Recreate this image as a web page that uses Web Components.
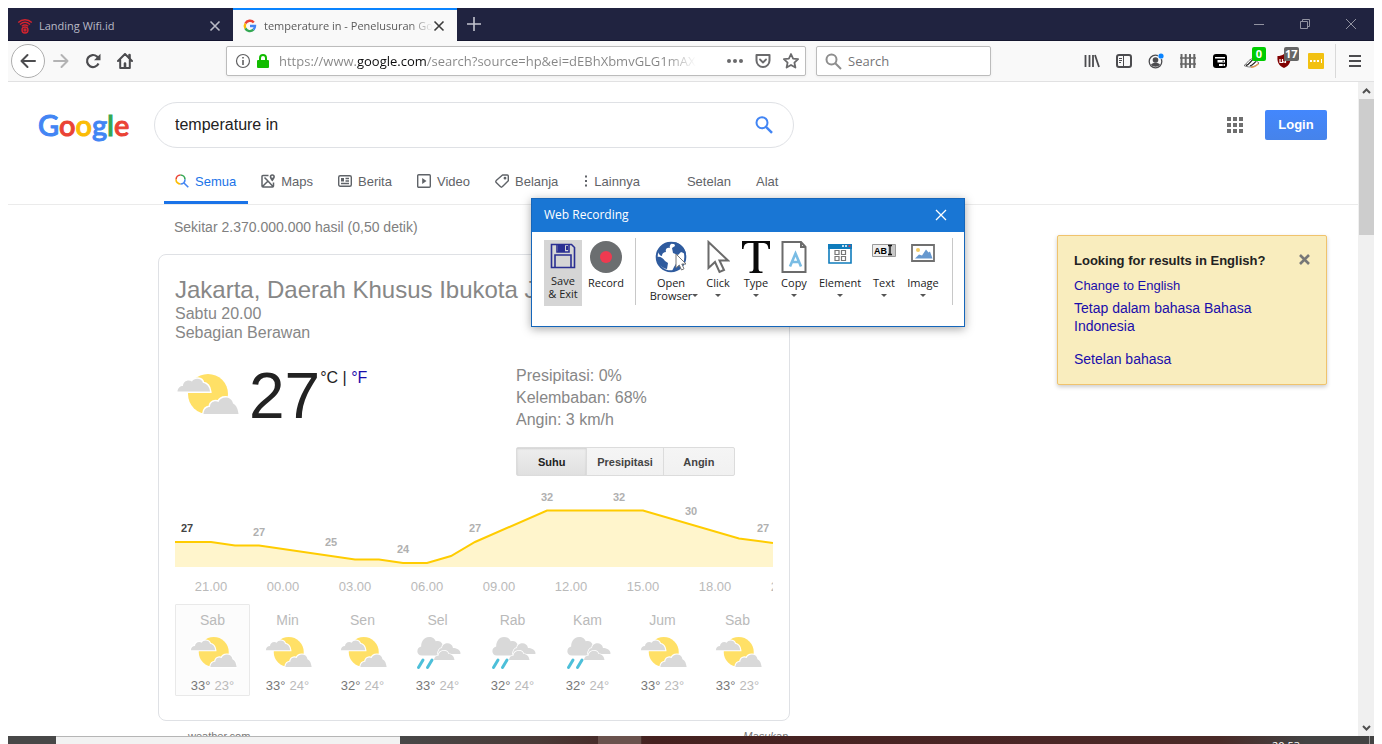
<!DOCTYPE html>
<html lang="id">
<head>
<meta charset="utf-8">
<title>temperature in - Penelusuran Google</title>
<style>
  html, body { height: 100%; }
  body { margin: 0; background: #fff; overflow: hidden; font-family: "Liberation Sans", Arial, sans-serif; }
</style>
</head>
<body>
<browser-window></browser-window>
<script>
const BASE = `
  *, *::before, *::after { box-sizing: border-box; }
  :host { box-sizing: border-box; }
  button { font: inherit; color: inherit; border: 0; background: none; padding: 0; margin: 0; cursor: pointer; }
  a { color: inherit; text-decoration: none; }
  svg { display: block; }
`;

function component(name, css, html) {
  const template = document.createElement('template');
  template.innerHTML = `<style>${BASE}${css}</style>${html}`;
  customElements.define(name, class extends HTMLElement {
    constructor() {
      super();
      this.attachShadow({ mode: 'open' }).append(template.content.cloneNode(true));
    }
  });
}

/* ---------- Browser chrome ---------- */

component('browser-tab', `
  :host { display: flex; align-items: center; width: 225px; height: 33px; padding: 3px 12px 0 9px;
          color: #b9bac6; border-bottom: 1px solid #12132e; }
  :host([active]) { width: 224px; background: #f9f9f9; color: #5a5a5a; border-bottom: 0; border-top: 2px solid #0a84ff; padding-top: 0; }
  .title { flex: 1; margin-left: 6px; min-width: 0; overflow: hidden; white-space: nowrap; font-size: 11px; line-height: 18px; }
  :host([active]) .title { -webkit-mask-image: linear-gradient(90deg, #000 86%, transparent 100%); mask-image: linear-gradient(90deg, #000 86%, transparent 100%); }
  :host([active]) button { color: #3c3c3c; }
  button { flex: none; width: 12px; }
`, `
  <slot name="icon"></slot>
  <span class="title"><slot></slot></span>
  <button aria-label="Close tab"><svg width="12" height="12" viewBox="0 0 12 12" stroke="currentColor" stroke-width="1.6"><path d="M1.500 1.500l9 9M10.500 1.500l-9 9"/></svg></button>
`);

component('tab-strip', `
  :host { display: flex; height: 33px; background: #202340; border-bottom: 1px solid #15172f; font-family: "Open Sans", "Noto Sans", sans-serif; color: #c4c5cf; }
  .add { width: 34px; display: grid; place-items: center; }
  .controls { margin-left: auto; display: flex; color: #9293a1; }
  .controls button { width: 46px; height: 32px; display: grid; place-items: center; }
`, `
  <browser-tab>
    <svg slot="icon" width="16" height="16" viewBox="0 0 16 16" fill="none" stroke="#d3232e" stroke-width="1.4">
      <path d="M1.200 4.500C5 .8 11 .8 14.800 4.500M3 6.500c3-2.600 7-2.600 10 0M4.800 8.300c2-1.600 4.400-1.600 6.400 0"/><circle cx="8" cy="12" r="3"/><circle cx="8" cy="12" r="1"/>
    </svg>Landing Wifi.id
  </browser-tab>
  <browser-tab active>
    <svg slot="icon" width="16" height="16" viewBox="0 0 16 16" fill="none" stroke-width="2.400">
      <path stroke="#ea4335" d="M3.400 5.600A5 5 0 0 1 11.800 4.500"/><path stroke="#fbbc05" d="M3.400 10.400a5 5 0 0 1 0-4.800"/>
      <path stroke="#34a853" d="M11.400 11.700a5 5 0 0 1-8-1.300"/><path stroke="#4285f4" d="M8 8h5a5 5 0 0 1-1.600 3.700"/>
    </svg>temperature in - Penelusuran Google
  </browser-tab>
  <button class="add" aria-label="New tab"><svg width="14" height="14" viewBox="0 0 14 14" stroke="currentColor" stroke-width="1.600"><path d="M7 0v14M0 7h14"/></svg></button>
  <div class="controls">
    <button aria-label="Minimize"><svg width="10" height="10" stroke="currentColor"><path d="M0 5.500h10"/></svg></button>
    <button aria-label="Restore"><svg width="10" height="10" fill="none" stroke="currentColor"><path d="M.5 2.500h7v7h-7zM2.500 2.500v-2h7v7h-2"/></svg></button>
    <button aria-label="Close"><svg width="10" height="10" stroke="currentColor"><path d="M0 0l10 10M10 0L0 10"/></svg></button>
  </div>
`);

component('tool-button', `
  :host { display: block; flex: none; width: 32px; height: 32px; color: #4c4c4f; }
  button { position: relative; width: 100%; height: 100%; display: grid; place-items: center; }
  ::slotted([slot="badge"]) { position: absolute; left: 16px; top: 2px; min-width: 14px; height: 14px; padding: 0 1px; border-radius: 2px;
    background: var(--badge, #0c0); color: #fff; font: bold 11px/14px "Open Sans", sans-serif; text-align: center; }
`, `<button part="button"><slot></slot><slot name="badge"></slot></button>`);

component('url-bar', `
  :host { display: flex; align-items: center; height: 30px; padding: 0 5px 0 8px; gap: 5px; background: #fff; border: 1px solid #bcbcbc; border-radius: 2px; box-shadow: 0 1px 3px rgba(0,0,0,.06); color: #6a6a6c; }
  input { flex: 1; min-width: 0; height: 26px; margin-left: 4px; padding: 0; border: 0; outline: 0; font: 13px/26px "Open Sans", "Noto Sans", sans-serif;
    background: linear-gradient(90deg, #858585 0 78px, #0c0c0d 78px 148px, #858585 148px calc(100% - 50px), transparent calc(100% - 20px));
    -webkit-background-clip: text; background-clip: text; color: transparent; }
  button { width: 18px; margin-left: 5px; display: grid; place-items: center; }
`, `
  <svg width="16" height="16" viewBox="0 0 16 16" fill="none" stroke="#5f5f61"><circle cx="8" cy="8" r="6.500" stroke-width="1.200"/><path d="M8 7v5M8 4v1.600" stroke-width="1.600"/></svg>
  <svg width="14" height="16" viewBox="0 0 14 16"><path d="M4 8V5a3 3 0 0 1 6 0v3" fill="none" stroke="#12bc00" stroke-width="2"/><rect x="1" y="7" width="12" height="8" rx="1" fill="#12bc00"/></svg>
  <input aria-label="Address" value="https://www.google.com/search?source=hp&amp;ei=dEBhXbmvGLG1mAX">
  <button aria-label="Page actions"><svg width="16" height="16" fill="currentColor"><circle cx="2" cy="8" r="2"/><circle cx="8" cy="8" r="2"/><circle cx="14" cy="8" r="2"/></svg></button>
  <button aria-label="Pocket"><svg width="16" height="16" viewBox="0 0 16 16" fill="none" stroke="currentColor" stroke-width="2" stroke-linecap="round" stroke-linejoin="round"><path d="M1.500 2h13v5.500a6.500 6.500 0 0 1-13 0z"/><path d="M5 6.500l3 3 3-3" stroke-width="1.800"/></svg></button>
  <button aria-label="Bookmark"><svg width="18" height="18" viewBox="0 0 18 18" fill="none" stroke="currentColor" stroke-width="1.800" stroke-linejoin="round"><path d="M9 2l2.100 4.600 5 .6-3.700 3.400 1 4.900L9 13l-4.400 2.500 1-4.900L1.900 7.200l5-.6z"/></svg></button>
`);

component('nav-bar', `
  :host { display: flex; align-items: center; height: 41px; padding: 0 3px; background: #f9f9f9; border-bottom: 1px solid #e1e1e2; }
  .space { flex: 85 1 85px; }
  url-bar { flex: 580 1 580px; min-width: 0; margin-right: 10px; }
  .find { flex: 175 1 175px; min-width: 0; height: 30px; display: flex; align-items: center; gap: 6px; padding: 0 8px; background: #fff; border: 1px solid #bcbcbc; border-radius: 2px; box-shadow: 0 1px 3px rgba(0,0,0,.06); }
  .find input { flex: 1; min-width: 0; padding: 0; border: 0; outline: 0; font: 13px/24px "Open Sans", "Noto Sans", sans-serif; }
  .find input::placeholder { color: #757577; }
  .back { width: 34px; height: 34px; border: 1px solid #aeaeae; border-radius: 50%; background: #fff; }
  .line { flex: none; width: 1px; height: 34px; margin: 0 3px; background: #d9d9d9; }
  .dim { color: #b3b3b4; }
`, `
  <tool-button class="back"><svg width="16" height="16" viewBox="0 0 16 16" fill="none" stroke="currentColor" stroke-width="2" stroke-linecap="round" stroke-linejoin="round"><path d="M15 8H1.500M7.500 2l-6 6 6 6"/></svg></tool-button>
  <tool-button class="dim"><svg width="16" height="16" viewBox="0 0 16 16" fill="none" stroke="currentColor" stroke-width="2" stroke-linecap="round" stroke-linejoin="round"><path d="M1 8h13.500M8.500 2l6 6-6 6"/></svg></tool-button>
  <tool-button><svg width="16" height="16" viewBox="0 0 16 16"><path d="M13.500 10.500A6 6 0 1 1 12 3.500L13 5" fill="none" stroke="currentColor" stroke-width="2.200"/><path d="M15.500.8v6.400H9z" fill="currentColor"/></svg></tool-button>
  <tool-button><svg width="16" height="16" viewBox="0 0 16 16" fill="none" stroke="currentColor" stroke-width="2" stroke-linecap="round" stroke-linejoin="round"><path d="M1 8l7-7 7 7M3.200 7v8h9.600V7"/><path d="M8 15v-4.500M12.500 2v3" stroke-width="2.600"/></svg></tool-button>
  <div class="space"></div>
  <url-bar></url-bar>
  <label class="find"><svg width="17" height="17" viewBox="0 0 17 17" fill="none" stroke="#8e8e8e" stroke-width="2"><circle cx="6.500" cy="6.500" r="5"/><path d="M10.300 10.300l5.700 5.700"/></svg><input aria-label="Search" placeholder="Search"></label>
  <div class="space"></div>
  <tool-button><svg width="16" height="16" viewBox="0 0 16 16" fill="none" stroke="currentColor" stroke-width="1.800"><path d="M1.500 2v12M5.500 2v12M9 2v12M11 2l4 12"/></svg></tool-button>
  <tool-button><svg width="16" height="16" viewBox="0 0 16 16" fill="none" stroke="currentColor"><rect x="1" y="2" width="14" height="12" rx="2" stroke-width="2"/><path d="M7.500 2v12M3 5.500h3M3 7.500h3M3 9.500h2"/></svg></tool-button>
  <tool-button><svg width="16" height="16" viewBox="0 0 16 16"><circle cx="7.500" cy="8.500" r="6.300" fill="none" stroke="currentColor" stroke-width="1.300"/><circle cx="7.500" cy="7" r="2.800" fill="currentColor"/><path d="M3 11.500c2-2.200 7-2.200 9 0-1.500 3-7.500 3-9 0z" fill="currentColor"/><circle cx="13" cy="3" r="3.200" fill="#f9f9f9"/><circle cx="13" cy="3" r="2.600" fill="#0a84ff"/></svg></tool-button>
  <tool-button><svg width="18" height="16" viewBox="0 0 18 16" fill="none" stroke="#666" stroke-width="2"><path d="M2.500 1v14M6.700 1v14M11 1v14M15.300 1v14"/><path d="M1 5h16M1 11h16" stroke-width="1.400"/></svg></tool-button>
  <tool-button><svg width="16" height="16" viewBox="0 0 16 16"><rect x="1" y="1" width="14" height="14" rx="3" fill="#000"/><path d="M3 4h10v1.500H3zM5.500 7H13v2.500H5.500zM7 11h6v2H7z" fill="#fff"/><path d="M10.500 8.200h1.500M10.500 12h1.500" stroke="#000"/></svg></tool-button>
  <tool-button><svg width="18" height="16" viewBox="0 0 18 16" fill="none"><path d="M1 12.500c3-1.500 4-6 9-7l6 4.500c-3 3.500-9 5.500-15 2.500z" fill="#fff" stroke="#555" stroke-width=".8"/><path d="M3 12.500c4-1 4-4 7-6M7 13c3-1 4-3 6-4.500" stroke="#222" stroke-width="1.300"/><path d="M8 14.300c3 0 5-1 7.500-3.500" stroke="#e39b55" stroke-width="1.300"/></svg><span slot="badge">0</span></tool-button>
  <tool-button style="--badge:#666"><svg width="16" height="16" viewBox="0 0 16 16"><path d="M8 1c2 1.500 4 2 6.500 2 .5 6-1 9.500-6.500 12C2.500 12.500 1 9 1.500 3 4 3 6 2.500 8 1z" fill="#800000"/><path d="M4 6v3.500h2.500V6M6.500 8.500l3 1V6" fill="none" stroke="#fff" stroke-width="1.200"/></svg><span slot="badge">17</span></tool-button>
  <tool-button><svg width="16" height="16" viewBox="0 0 16 16"><rect width="16" height="16" rx="1" fill="#f2c112"/><path d="M2 7h2v2H2zM5.500 7h2v2h-2zM9 7h2v2H9zM13 6h1v4h-1z" fill="#fff"/></svg></tool-button>
  <div class="line"></div>
  <tool-button><svg width="14" height="14" stroke="currentColor" stroke-width="2"><path d="M1 2h12M1 7h12M1 12h12"/></svg></tool-button>
`);

component('scroll-track', `
  :host { display: flex; flex-direction: column; align-items: center; width: 16px; background: #f0f0f0; color: #505050; }
  button { width: 16px; height: 17px; display: grid; place-items: center; flex: none; }
  .thumb { width: 15px; height: 136px; background: #cdcdcd; margin-bottom: auto; }
`, `
  <button aria-label="Scroll up"><svg width="9" height="6" fill="none" stroke="currentColor" stroke-width="2"><path d="M1 5l3.500-3.500L8 5"/></svg></button>
  <div class="thumb"></div>
  <button aria-label="Scroll down"><svg width="9" height="6" fill="none" stroke="currentColor" stroke-width="2"><path d="M1 1l3.500 3.500L8 1"/></svg></button>
`);

/* ---------- Search page ---------- */

component('search-header', `
  :host { display: block; padding: 20px 31px 0 30px; border-bottom: 1px solid #ebebeb; }
  .row { display: flex; align-items: center; height: 46px; }
  .logo { flex: none; width: 116px; font: 500 29px/44px Lato, "Open Sans", sans-serif; color: #4285f4; -webkit-text-stroke: 1px currentColor; }
  .r { color: #ea4335; } .y { color: #fbbc05; } .g { color: #34a853; }
  form { flex: 0 1 640px; height: 46px; display: flex; align-items: center; padding: 0 20px; border: 1px solid #dfe1e5; border-radius: 24px; }
  input { flex: 1; min-width: 0; border: 0; outline: 0; padding: 0; font: 16px/24px "Liberation Sans", Arial, sans-serif; color: #222; background: none; }
  .apps { margin-left: auto; margin-right: 22px; }
  .login { width: 62px; height: 30px; line-height: 30px; border-radius: 2px; background: linear-gradient(#4387fd, #4683ea); color: #fff; font-size: 13px; font-weight: bold; text-align: center; }
  nav { display: flex; gap: 2px; margin-left: 126px; height: 56px; color: #5f6368; font-size: 13px; }
  nav a { display: flex; align-items: center; gap: 6px; padding: 13px 12px 0 11px; border-bottom: 3px solid transparent; }
  nav a.on { color: #1a73e8; border-color: #1a73e8; }
  nav a.tools { margin-left: 22px; }
`, `
  <div class="row">
    <a class="logo" href="#" aria-label="Google">G<span class="r">o</span><span class="y">o</span>g<span class="g">l</span><span class="r">e</span></a>
    <form onsubmit="return false">
      <input aria-label="Telusuri" value="temperature in">
      <button aria-label="Cari"><svg width="18" height="18" viewBox="0 0 18 18" fill="none" stroke="#4285f4" stroke-width="2"><circle cx="7" cy="6.700" r="5.500"/><path d="M11 10.800l6 6" stroke-width="2.400"/></svg></button>
    </form>
    <button class="apps" aria-label="Aplikasi Google"><svg width="16" height="16" fill="#6f6f6f"><path d="M0 0h4v4H0zM6 0h4v4H6zM12 0h4v4h-4zM0 6h4v4H0zM6 6h4v4H6zM12 6h4v4h-4zM0 12h4v4H0zM6 12h4v4H6zM12 12h4v4h-4z"/></svg></button>
    <a class="login" href="#">Login</a>
  </div>
  <nav>
    <a class="on" href="#"><svg width="14" height="14" viewBox="0 0 14 14" fill="none" stroke-width="1.600"><path stroke="#ea4335" d="M1.100 5.500A4.500 4.500 0 0 1 5.500 1"/><path stroke="#34a853" d="M5.500 1A4.500 4.500 0 0 1 10 5.500"/><path stroke="#fbbc05" d="M1 5.500A4.500 4.500 0 0 0 5.500 10"/><path stroke="#4285f4" d="M5.500 10A4.500 4.500 0 0 0 10 5.500M8.700 8.700l4.600 4.600"/></svg>Semua</a>
    <a href="#"><svg width="14" height="14" viewBox="0 0 14 14" fill="none" stroke="#5f6368" stroke-width="1.500"><path d="M7.500 1.500H2A1 1 0 0 0 1 2.500V12a1 1 0 0 0 1 1h9.500a1 1 0 0 0 1-1V8.500M1.500 12.500L7 7l5 5.500M3.500 3.500L7 7"/><path d="M11.300.2a2.600 2.600 0 0 1 2.600 2.600c0 2-2.600 4.700-2.600 4.700S8.700 4.800 8.700 2.800A2.600 2.600 0 0 1 11.300.2z" fill="#5f6368" stroke="none"/><circle cx="11.300" cy="2.800" r="1" fill="#fff" stroke="none"/></svg>Maps</a>
    <a href="#"><svg width="14" height="14" viewBox="0 0 14 14" fill="none" stroke="#5f6368" stroke-width="1.400"><rect x=".7" y="1.700" width="12.600" height="10.600" rx="1.500"/><path d="M3 9.500h8M7.500 4.500H11M7.500 7H11"/><path d="M3 4h3v3.500H3z" fill="#5f6368" stroke="none"/></svg>Berita</a>
    <a href="#"><svg width="14" height="14" viewBox="0 0 14 14" fill="none" stroke="#5f6368" stroke-width="1.400"><rect x=".7" y=".7" width="12.600" height="12.600" rx="1"/><path d="M5.200 4l4.300 3-4.300 3z" fill="#5f6368" stroke="none"/></svg>Video</a>
    <a href="#"><svg width="14" height="14" viewBox="0 0 14 14" fill="none" stroke="#5f6368" stroke-width="1.400" stroke-linejoin="round"><path d="M7.500 1h4.800a1 1 0 0 1 1 1v4.800L7.500 12.600c-.8.800-1.400.8-2.200 0L1.200 8.600c-.6-.7-.6-1.300 0-2z"/><circle cx="10" cy="4.200" r=".7" fill="#5f6368"/></svg>Belanja</a>
    <a href="#"><svg width="5" height="14" fill="#5f6368"><path d="M2 1.500h2v2H2zM2 6h2v2H2zM2 10.500h2v2H2z"/></svg>Lainnya</a>
    <a class="tools" href="#">Setelan</a>
    <a href="#">Alat</a>
  </nav>
`);

component('partly-cloudy', `:host { display: block; } svg { width: 100%; height: 100%; }`, `
  <svg viewBox="-1 0 64 64"><circle cx="32" cy="32" r="20" fill="#ffe066"/>
    <g fill="#d9d9d9" stroke="#fff" stroke-width="3" style="paint-order:stroke">
      <path d="M1.500 29.500c.3-3.500 2.500-5.500 5.500-5.500 0-4.500 5-7 9-4.500 2-4 10-4 11 1.500 4 .5 6.500 4 7 8.500z"/>
      <path d="M27.500 52c.5-5 3-7 6.500-7 0-5 5-7 8.500-5 2-6 13-6.500 14.500 1.500 3.500 1.500 5 6 5.500 10.500z"/>
    </g></svg>`);

component('rain-clouds', `:host { display: block; } svg { width: 100%; height: 100%; }`, `
  <svg viewBox="1 0 48 48"><g fill="#d9d9d9" stroke="#fff" stroke-width="1.600" style="paint-order:stroke">
      <path d="M9 27.500c-6 0-6-8-.8-9-.2-4 2.300-9.500 7.800-9.500 4 0 6 2 6.700 4.300 3-1 5.500.2 6.500 2.500 3 5-2 11.700-4 11.700z"/>
      <path d="M25 26c0-3 1.500-6 4-6 .5-6 10-6.500 11 0 3 0 7.500 1.500 7.500 5.500 0 .5-.3.500-1 .5z"/>
      <path d="M21 32c.5-3.500 2-4 4.500-4.200C26 22 34 21 35.500 26c3.500 0 5.500 2.500 6 6z"/></g>
    <path d="M10 32l-4.500 7.500M19 32l-4.500 7.500" stroke="#4dbfd9" stroke-width="3" stroke-linecap="round"/></svg>`);

component('day-forecast', `
  :host { display: flex; flex-direction: column; align-items: center; flex: 0 1 75px; height: 92px; border: 1px solid transparent; border-radius: 1px; color: #bababa; }
  :host([selected]) { background: #fcfcfc; border-color: #e9e9e9; }
  .name { margin-top: 7px; font-size: 14px; line-height: 16px; }
  ::slotted([slot="icon"]) { width: 48px; height: 48px; }
  .range { display: flex; gap: 4px; margin-top: 2px; font-size: 13px; line-height: 16px; }
  .high { color: #777; }
`, `
  <span class="name"><slot></slot></span>
  <slot name="icon"></slot>
  <span class="range"><span class="high"><slot name="high"></slot></span><slot name="low"></slot></span>
`);

component('hourly-chart', `
  :host { display: block; overflow: hidden; }
  svg { width: 598px; height: 77px; font: bold 11px "Liberation Sans", Arial, sans-serif; }
  .hours { display: flex; margin-top: 12px; color: #bababa; font-size: 13px; line-height: 16px; }
  .hours span { flex: 0 0 72px; text-align: center; }
`, `
  <svg viewBox="0 0 598 77">
    <path fill="#fff5cc" d="M0 52H36L60 55.500H84L180 69.500H204L228 73H252L276 66 300 52 372 20.500H468L564 48.500 598 53V77H0z"/>
    <path fill="none" stroke="#fc0" stroke-width="2" d="M0 52H36L60 55.500H84L180 69.500H204L228 73H252L276 66 300 52 372 20.500H468L564 48.500 598 53"/>
    <g fill="#b0b0b0" text-anchor="middle">
      <text x="12" y="42" fill="#444">27</text><text x="84" y="46">27</text><text x="156" y="56">25</text><text x="228" y="63">24</text>
      <text x="300" y="42">27</text><text x="372" y="11">32</text><text x="444" y="11">32</text><text x="516" y="25">30</text><text x="588" y="42">27</text>
    </g>
  </svg>
  <div class="hours"><span>21.00</span><span>00.00</span><span>03.00</span><span>06.00</span><span>09.00</span><span>12.00</span><span>15.00</span><span>18.00</span><span>21.00</span></div>
`);

component('weather-card', `
  :host { display: block; width: 632px; max-width: 100%; height: 467px; padding: 21px 16px 0; border: 1px solid #dfe1e5; border-radius: 8px; color: #878787; font-size: 16px; }
  h2 { margin: 0 0 1px; font-size: 24px; font-weight: normal; line-height: 27px; white-space: nowrap; overflow: hidden; }
  .sub { line-height: 19px; }
  .now { display: grid; grid-template-columns: 341px 1fr; margin-top: 20px; height: 128px; }
  .temp { display: flex; align-items: flex-start; color: #222; }
  partly-cloudy.big { width: 64px; height: 64px; }
  .deg { margin-left: 10px; font-size: 64px; line-height: 68px; }
  .unit { line-height: 24px; margin-top: 4px; }
  .unit a { color: #1a0dab; }
  .facts { padding-top: 3px; line-height: 22px; }
  .modes { display: flex; margin-top: 16px; width: 219px; height: 29px; border: 1px solid #dcdcdc; border-radius: 2px; background: linear-gradient(#f5f5f5, #f1f1f1); font-size: 11px; font-weight: bold; color: #444; }
  .modes button { flex: 1 1 71px; border-right: 1px solid #dcdcdc; }
  .modes button:nth-child(2) { flex-basis: 77px; }
  .modes button:last-child { border: 0; }
  .modes .on { color: #222; background: linear-gradient(#eee, #e0e0e0); box-shadow: inset 0 1px 2px rgba(0,0,0,.12); }
  .days { display: flex; margin-top: 9px; margin-right: -2px; }
`, `
  <h2>Jakarta, Daerah Khusus Ibukota Jakarta</h2>
  <div class="sub">Sabtu 20.00</div>
  <div class="sub">Sebagian Berawan</div>
  <div class="now">
    <div class="temp"><partly-cloudy class="big"></partly-cloudy><span class="deg">27</span><span class="unit">°C | <a href="#">°F</a></span></div>
    <div class="facts">
      <div>Presipitasi: 0%</div><div>Kelembaban: 68%</div><div>Angin: 3 km/h</div>
      <div class="modes"><button class="on">Suhu</button><button>Presipitasi</button><button>Angin</button></div>
    </div>
  </div>
  <hourly-chart></hourly-chart>
  <div class="days">
    <day-forecast selected>Sab<partly-cloudy slot="icon"></partly-cloudy><span slot="high">33°</span><span slot="low">23°</span></day-forecast>
    <day-forecast>Min<partly-cloudy slot="icon"></partly-cloudy><span slot="high">33°</span><span slot="low">24°</span></day-forecast>
    <day-forecast>Sen<partly-cloudy slot="icon"></partly-cloudy><span slot="high">32°</span><span slot="low">24°</span></day-forecast>
    <day-forecast>Sel<rain-clouds slot="icon"></rain-clouds><span slot="high">33°</span><span slot="low">24°</span></day-forecast>
    <day-forecast>Rab<rain-clouds slot="icon"></rain-clouds><span slot="high">32°</span><span slot="low">24°</span></day-forecast>
    <day-forecast>Kam<rain-clouds slot="icon"></rain-clouds><span slot="high">32°</span><span slot="low">24°</span></day-forecast>
    <day-forecast>Jum<partly-cloudy slot="icon"></partly-cloudy><span slot="high">33°</span><span slot="low">23°</span></day-forecast>
    <day-forecast>Sab<partly-cloudy slot="icon"></partly-cloudy><span slot="high">33°</span><span slot="low">23°</span></day-forecast>
  </div>
`);

component('language-notice', `
  :host { display: block; width: 270px; height: 150px; padding: 16px; background: #f9edbe; border: 1px solid #f0c36d; border-radius: 2px; box-shadow: 0 2px 4px rgba(0,0,0,.2); color: #1a0dab; font-size: 14px; line-height: 18px; }
  .head { display: flex; justify-content: space-between; align-items: flex-start; color: #222; font-size: 13px; font-weight: bold; height: 18px; }
  .head button { padding-top: 2px; }
  .change { display: block; margin-top: 7px; font-size: 13px; }
  .keep { display: block; margin-top: 4px; }
  .set { display: block; margin-top: 15px; }
`, `
  <div class="head"><span>Looking for results in English?</span><button aria-label="Tutup"><svg width="11" height="11" stroke="#777" stroke-width="2.600"><path d="M1 1l9 9M10 1l-9 9"/></svg></button></div>
  <a class="change" href="#">Change to English</a>
  <a class="keep" href="#">Tetap dalam bahasa Bahasa Indonesia</a>
  <a class="set" href="#">Setelan bahasa</a>
`);

component('search-page', `
  :host { display: block; overflow: hidden; }
  .body { display: flex; justify-content: space-between; padding: 0 31px 0 150px; }
  .stats { margin: 13px 16px 18px; color: #808080; font-size: 14px; line-height: 18px; }
  .source { display: flex; justify-content: space-between; padding: 8px 2px 0 30px; color: #777; font-size: 11px; line-height: 14px; }
  language-notice { margin-top: 30px; flex: none; }
`, `
  <search-header></search-header>
  <div class="body">
    <main>
      <div class="stats">Sekitar 2.370.000.000 hasil (0,50 detik)</div>
      <weather-card></weather-card>
      <div class="source"><a href="#">weather.com</a><a href="#"><i>Masukan</i></a></div>
    </main>
    <language-notice></language-notice>
  </div>
`);

/* ---------- Recording tool ---------- */

component('record-action', `
  :host { display: block; flex: none; height: 66px; color: #222; }
  button { width: 100%; height: 100%; display: flex; flex-direction: column; align-items: center; white-space: nowrap; font-size: 11px; line-height: 13px; }
  .icon { height: 36px; }
  :host([menu]) button::after { content: ""; border: 3px solid transparent; border-top-color: #555; border-bottom: 0; margin-top: 5px; }
  :host([menu="inline"]) button { position: relative; }
  :host([menu="inline"]) button::after { position: absolute; right: 1px; top: 49px; }
  :host([pressed]) { background: #d5d5d5; }
  :host([pressed]) .icon { height: 34px; }
`, `<button><span class="icon"><slot name="icon"></slot></span><span><slot></slot></span></button>`);

component('recording-dialog', `
  :host { display: block; width: 434px; height: 129px; background: #fff; border: 1px solid #1566ba; box-shadow: 0 2px 9px rgba(0,0,0,.35); font-family: "Open Sans", "Noto Sans", sans-serif; }
  header { display: flex; align-items: center; justify-content: space-between; height: 33px; padding: 0 17px 2px 12px; background: #1976d4; color: #fff; font-size: 12px; line-height: 16px; }
  .bar { display: flex; padding: 8px 4px 8px 12px; }
  .bar hr { flex: none; width: 1px; height: 67px; margin: -2px 7px 0; border: 0; background: #c8c8c8; }
  .bar hr:last-child { margin-right: 0; }
  record-action { width: 38px; }
  .record { width: 44px; margin-left: 2px; } .open { width: 56px; } .element { width: 54px; } .text { width: 34px; } .image { width: 44px; }
`, `
  <header><span>Web Recording</span><button aria-label="Close"><svg width="12" height="12" stroke="currentColor" stroke-width="1.300"><path d="M1 1l10 10M11 1L1 11"/></svg></button></header>
  <div class="bar">
    <record-action pressed><svg slot="icon" width="26" height="32" viewBox="0 0 26 32" fill="none" stroke="#2a2f92" stroke-width="1.600"><path d="M1.500 4.500h20l3 3v20h-23z"/><path d="M7 5v7h12V5M5 27V15h16v12"/><path d="M8 4.500h7V12H8z" fill="#2a2f92" stroke="none"/><path d="M17 6v4" stroke-width="2"/></svg>Save<br>&amp; Exit</record-action>
    <record-action class="record"><svg slot="icon" width="32" height="34" viewBox="0 0 32 34"><circle cx="16" cy="17" r="16" fill="#6b6e70"/><circle cx="16" cy="17" r="6" fill="#ee3a50"/></svg>Record</record-action>
    <hr>
    <record-action class="open" menu="inline"><svg slot="icon" width="32" height="34" viewBox="0 0 32 34"><circle cx="16" cy="17" r="14.300" fill="#fff" stroke="#2f5b9e" stroke-width="2"/><g fill="#2f5b9e"><path d="M3 12C6 5 11 2 17 2c-1 3-3 3-2 6-3-1-5 1-4 4-2 0-4 1-4 4-2 0-3-2-4-4zM19 2c7 1 11 6 12 12l-5-2-3 3-5-2-1-5 3-2zM2 17c3-1 6 1 8 4l3 2-1 6C6 28 2 23 2 17zM22 22l6 3c-3 4-6 6-11 6l2-4z"/></g><path d="M21 14v14l3.300-3 2.200 5 2.500-1.200-2.200-4.800H31z" fill="#fff" stroke="#777"/></svg>Open<br>Browser</record-action>
    <record-action menu><svg slot="icon" width="24" height="34" viewBox="0 0 24 34" fill="#fff" stroke="#6b6b6b" stroke-width="2"><path d="M2.500 2v26l6.500-6 4.500 10 4.500-2-4.500-9.500H22z"/></svg>Click</record-action>
    <record-action menu><svg slot="icon" width="28" height="34" viewBox="0 0 28 34"><path d="M0 1h28v8h-1.500C26 4.500 24.500 3 20 3h-3.500v25c0 3 1 3.500 4 3.500V33h-13v-1.500c3 0 4-.5 4-3.500V3H8C3.500 3 2 4.500 1.500 9H0z" fill="#0a0a0a"/></svg>Type</record-action>
    <record-action menu><svg slot="icon" width="26" height="34" viewBox="0 0 26 34" fill="none"><path d="M1.500 2H20l4.500 5v25h-23z" stroke="#6b6b6b" stroke-width="2"/><path d="M20 2v5h4.500" stroke="#6b6b6b" stroke-width="2"/><path d="M9 26.500l5.500-13 5.500 13M11 22h7.500" stroke="#79bce4" stroke-width="2.600"/></svg>Copy</record-action>
    <record-action class="element" menu><svg slot="icon" width="24" height="34" viewBox="0 0 24 34" fill="none"><path d="M1 5h22v18H1z" stroke="#0f7cbc" stroke-width="1.600"/><path d="M0 4h24v5H0z" fill="#0f7cbc"/><path d="M14 6h2M17 6h2" stroke="#fff" stroke-width="1.500"/><path d="M20.500 6h2" stroke="#e34" stroke-width="1.500"/><path d="M7 10.500h4v4H7zM13.500 10.500h4v4h-4zM7 16.500h4v4H7zM13.500 16.500h4v4h-4z" stroke="#777" stroke-width="1.200"/></svg>Element</record-action>
    <record-action class="text" menu><svg slot="icon" width="24" height="34" viewBox="0 0 24 34"><path d="M.5 4.500h23v12H.5z" fill="#eee" stroke="#999"/><path d="M16 5h7v11h-7z" fill="#c8c8c8"/><text x="2" y="14" font-family="Liberation Sans" font-weight="bold" font-size="9">AB</text><path d="M16 5.500h4M16 14.500h4M18 6v8" stroke="#111" stroke-width="1.400"/></svg>Text</record-action>
    <record-action class="image" menu><svg slot="icon" width="24" height="34" viewBox="0 0 24 34"><path d="M1 5h22v16H1z" fill="#fff" stroke="#707070" stroke-width="1.800"/><circle cx="7" cy="10" r="2" fill="#f3cb63"/><path d="M4 18.500l4-4 3 1 4-6 2.500 3 1.500-1 2.500 7z" fill="#6698cf"/></svg>Image</record-action>
    <hr>
  </div>
`);

component('task-bar', `
  :host { display: flex; height: 8px; overflow: hidden; background: #484848; color: #fff; }
  .start { flex: none; width: 48px; }
  .search { flex: none; width: 344px; background: #f2f2f2; border-top: 1px solid #b5b5b5; }
  .apps { flex: 1; display: flex; background: linear-gradient(90deg, #484848 0, #4a3a37 14%, #45211f 26%, #4a2626 65%, #4a2a27 84%, #434343 93%); }
  .active { width: 44px; margin-left: 198px; background: #6a524d; border-right: 1px solid #49302c; }
  time { margin-left: auto; padding-top: 3px; width: 97px; font: 11px/14px "Open Sans", "Noto Sans", sans-serif; }
  .desk { width: 5px; border-left: 1px solid #999; }
`, `<div class="start"></div><div class="search"></div><div class="apps"><div class="active"></div><time>20.53</time><div class="desk"></div></div>`);

component('browser-window', `
  :host { display: flex; flex-direction: column; height: 100vh; padding: 8px 8px 0; position: relative; }
  tab-strip, nav-bar, task-bar { flex: none; }
  .view { flex: 1; min-height: 0; display: flex; }
  search-page { flex: 1; min-width: 0; }
  recording-dialog { position: absolute; left: 531px; top: 198px; }
`, `
  <tab-strip></tab-strip>
  <nav-bar></nav-bar>
  <div class="view"><search-page></search-page><scroll-track></scroll-track></div>
  <task-bar></task-bar>
  <recording-dialog></recording-dialog>
`);
</script>
</body>
</html>
